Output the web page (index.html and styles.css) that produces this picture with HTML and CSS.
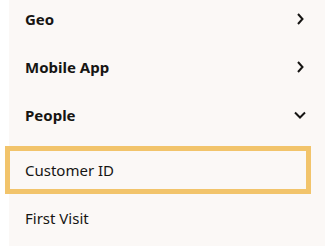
FILE: index.html
```html
<!DOCTYPE html>
<html lang="en">
<head>
    <meta charset="UTF-8">
    <meta name="viewport" content="width=device-width, initial-scale=1.0">
    <title>Attributes</title>
    <link rel="stylesheet" href="styles.css">
</head>
<body>
    <div class="panel">
        <ul class="tree">
            <li class="group">
                <div class="group-head">
                    <span class="group-label">Geo</span>
                    <svg class="chevron" viewBox="0 0 24 24"><path d="M10 7 L14.5 12 L10 17"/></svg>
                </div>
            </li>
            <li class="group">
                <div class="group-head">
                    <span class="group-label">Mobile App</span>
                    <svg class="chevron" viewBox="0 0 24 24"><path d="M10 7 L14.5 12 L10 17"/></svg>
                </div>
            </li>
            <li class="group open">
                <div class="group-head">
                    <span class="group-label">People</span>
                    <svg class="chevron" viewBox="0 0 24 24"><path d="M7 9.5 L12 14.5 L17 9.5"/></svg>
                </div>
                <ul class="children">
                    <li class="item focused">Customer ID</li>
                    <li class="item">First Visit</li>
                </ul>
            </li>
        </ul>
    </div>
</body>
</html>
```

FILE: styles.css
```css
* {
    margin: 0;
    padding: 0;
    box-sizing: border-box;
}

html, body {
    height: 100%;
    overflow: hidden;
}

body {
    font-family: 'Noto Sans', sans-serif;
    background: white;
    color: #161513;
}

.panel {
    margin-left: 9px;
    height: 100%;
    background: #fbf8f6;
}

.tree {
    list-style: none;
    margin-top: -5px;
}

.group-head {
    display: flex;
    align-items: center;
    justify-content: space-between;
    height: 48px;
    padding: 0 13px 0 16px;
}

.group-label {
    font-size: 15px;
    font-weight: 700;
}

.chevron {
    width: 24px;
    height: 24px;
    fill: none;
    stroke: #161513;
    stroke-width: 2;
}

.children {
    list-style: none;
    padding-top: 7px;
}

.item {
    display: flex;
    align-items: center;
    height: 48px;
    width: 306px;
    margin-left: -4px;
    padding-left: 20px;
    font-size: 15px;
}

.item.focused {
    border: 5px solid #f2c46b;
    padding-left: 15px;
}
```
